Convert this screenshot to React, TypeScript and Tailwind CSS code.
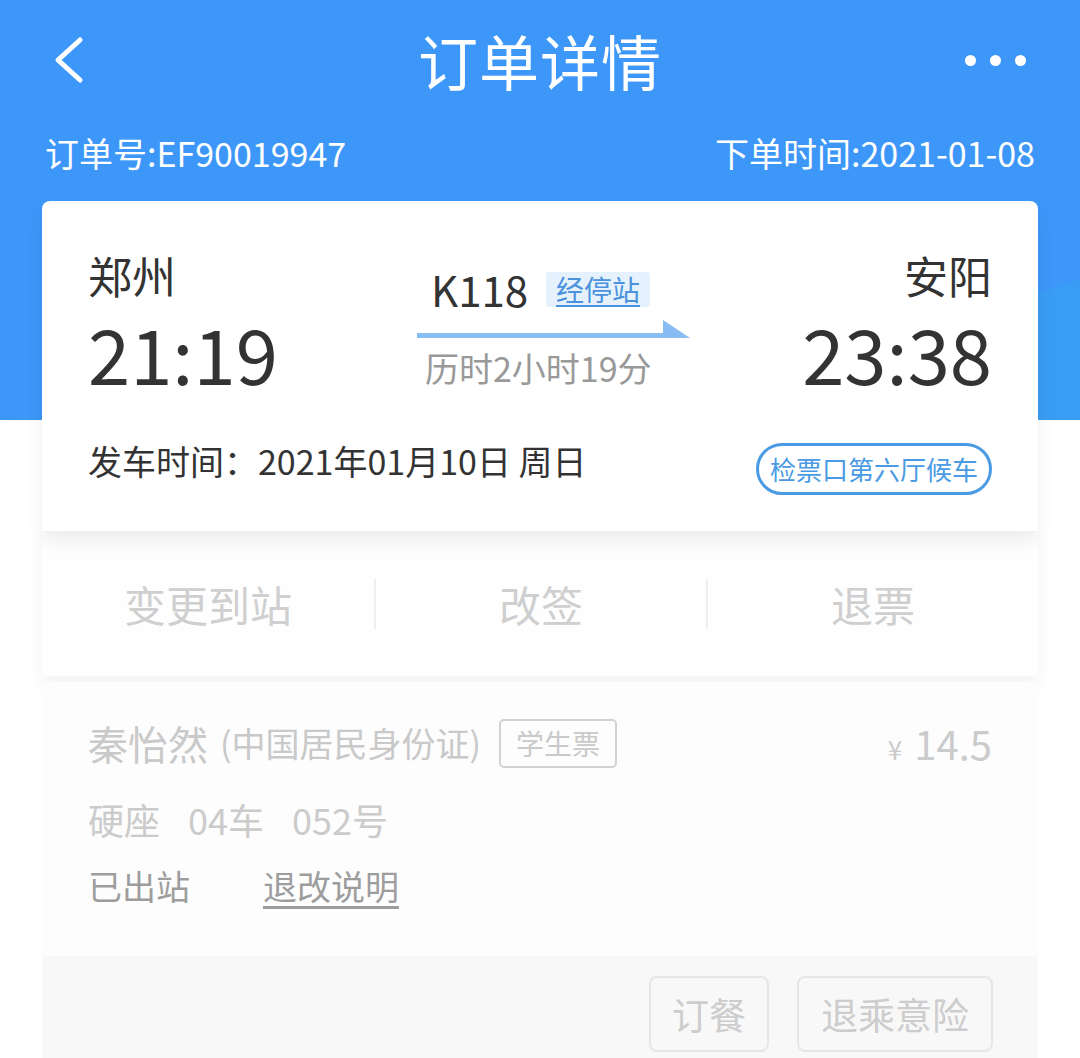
import React from 'react';

const font = { fontFamily: '"Noto Sans CJK SC", "Noto Sans", sans-serif' };

const Header = (): React.ReactElement => (
  <div className="relative h-[420px] overflow-hidden bg-[#3d97f8] text-white">
    {/* soft wave at bottom right */}
    <svg className="absolute bottom-0 right-0" width="1080" height="160" viewBox="0 0 1080 160">
      <path d="M0 160 C300 150 700 140 1080 20 L1080 160 Z" fill="#38a3f2" opacity="0.55" />
    </svg>
    <div className="relative grid h-[120px] grid-cols-[1fr_auto_1fr] items-center px-[48px]">
      <svg width="36" height="48" viewBox="0 0 36 48" className="ml-[2px]">
        <path d="M30 4 L8 24 L30 44" fill="none" stroke="white" strokeWidth="5" strokeLinecap="round" strokeLinejoin="round" />
      </svg>
      <div className="text-[60px] leading-none tracking-[1px]">订单详情</div>
      <div className="flex justify-end gap-[14px] pr-[6px]">
        <span className="h-[11px] w-[11px] rounded-full bg-white" />
        <span className="h-[11px] w-[11px] rounded-full bg-white" />
        <span className="h-[11px] w-[11px] rounded-full bg-white" />
      </div>
    </div>
    <div className="relative flex items-center justify-between px-[45px] pt-[16px] text-[34px] leading-none">
      <span>订单号:EF90019947</span>
      <span>下单时间:2021-01-08</span>
    </div>
  </div>
);

const TripCard = (): React.ReactElement => (
  <div className="relative rounded-t-[8px] bg-white px-[46px] pt-[46px] pb-[36px] shadow-[0_10px_18px_rgba(0,0,0,0.07)]">
    <div className="flex">
      <div className="w-[329px] text-[#333]">
        <div className="text-[44px] leading-[56px]">郑州</div>
        <div className="mt-[4px] text-[76px] leading-[90px]">21:19</div>
      </div>
      <div className="w-[280px] pt-[14px]">
        <div className="flex items-center pl-[14px]">
          <span className="text-[42px] leading-[56px] text-[#333]">K118</span>
          <span className="ml-[18px] rounded-[3px] bg-[#e5f1fd] px-[10px] text-[28px] leading-[35px] text-[#4a92dc] underline underline-offset-[4px]">经停站</span>
        </div>
        <svg width="276" height="20" viewBox="0 0 276 20" className="mt-[3px] block">
          <rect x="0" y="13" width="250" height="5" fill="#88bdf3" />
          <path d="M246 0 L246 18 L273 18 Z" fill="#88bdf3" />
        </svg>
        <div className="mt-[8px] pl-[8px] text-[34px] leading-[40px] text-[#999]">历时2小时19分</div>
      </div>
      <div className="flex-1 text-right text-[#333]">
        <div className="text-[44px] leading-[56px]">安阳</div>
        <div className="mt-[4px] text-[76px] leading-[90px]">23:38</div>
      </div>
    </div>
    <div className="mt-[46px] flex items-start justify-between">
      <span className="text-[34px] leading-[36px] text-[#333]">发车时间：2021年01月10日 周日</span>
      <span className="rounded-full border-[3px] border-[#4a9be3] px-[11px] text-[26px] leading-[46px] text-[#4a9be3]">检票口第六厅候车</span>
    </div>
  </div>
);

const Actions = (): React.ReactElement => (
  <div className="grid h-[145px] grid-cols-3 items-center bg-[#fefefe] shadow-[0_10px_18px_rgba(0,0,0,0.05)]">
    {['变更到站', '改签', '退票'].map((t, i) => (
      <div key={t} className={`flex h-[50px] items-center justify-center text-[42px] text-[#cfcfcf] ${i > 0 ? 'border-l-2 border-[#efefef]' : ''}`}>
        {t}
      </div>
    ))}
  </div>
);

const Passenger = (): React.ReactElement => (
  <div className="mt-[6px] bg-[#fdfdfd]">
    <div className="px-[46px] pt-[33px] pb-[46px]">
      <div className="flex items-center justify-between">
        <div className="flex items-center text-[#c9c9c9]">
          <span className="text-[40px] leading-[56px]">秦怡然</span>
          <span className="ml-[12px] text-[34px] leading-[56px]">(中国居民身份证)</span>
          <span className="ml-[18px] rounded-[5px] border-2 border-[#d2d2d2] px-[15px] text-[28px] leading-[45px]">学生票</span>
        </div>
        <div className="flex items-baseline text-[#cbcbcb]">
          <span className="text-[26px]">¥</span>
          <span className="ml-[12px] text-[40px] leading-[56px]">14.5</span>
        </div>
      </div>
      <div className="mt-[23px] flex text-[36px] leading-[50px] text-[#cbcbcb]">
        <span className="mr-[28px]">硬座</span>
        <span className="mr-[28px]">04车</span>
        <span>052号</span>
      </div>
      <div className="mt-[18px] flex text-[34px] leading-[48px] text-[#9d9d9d]">
        <span className="w-[175px]">已出站</span>
        <span className="underline underline-offset-[6px]">退改说明</span>
      </div>
    </div>
    <div className="flex justify-end gap-[28px] bg-[#f8f8f8] px-[45px] pt-[20px] pb-[10px]">
      <span className="rounded-[8px] border-2 border-[#e6e6e6] px-[21px] text-[37px] leading-[72px] text-[#cdcdcd]">订餐</span>
      <span className="rounded-[8px] border-2 border-[#e6e6e6] px-[22px] text-[37px] leading-[72px] text-[#cdcdcd]">退乘意险</span>
    </div>
  </div>
);

export default function App(): React.ReactElement {
  return (
    <div className="h-[1058px] overflow-hidden bg-white" style={font}>
      <Header />
      <div className="relative -mt-[219px] px-[42px]">
        <TripCard />
        <Actions />
        <Passenger />
      </div>
    </div>
  );
}
